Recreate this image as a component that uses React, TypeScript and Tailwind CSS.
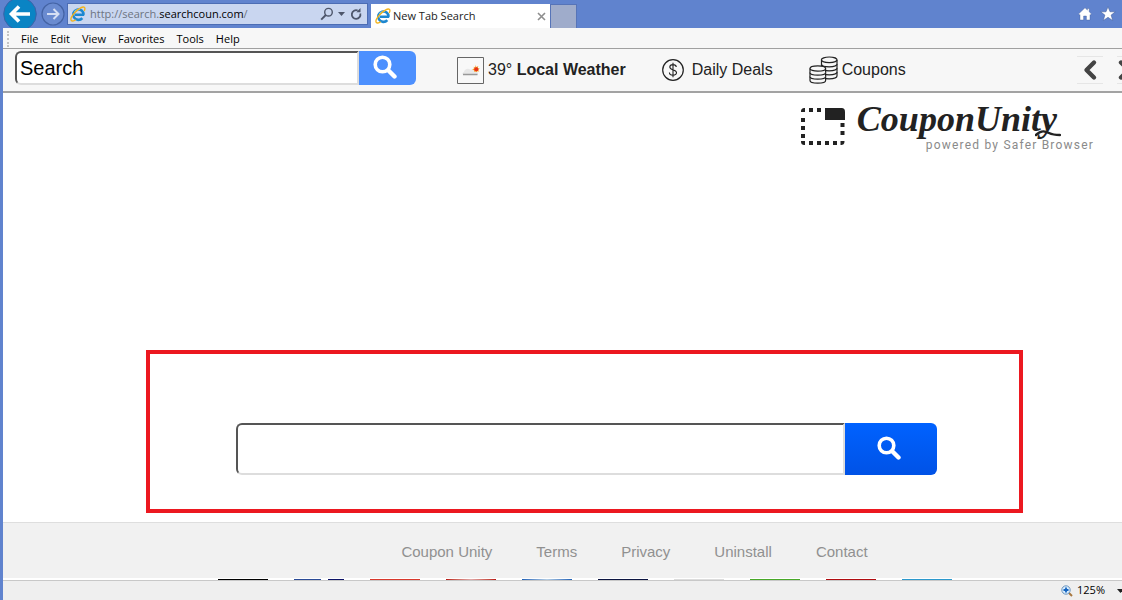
import React from 'react'

const menuItems = ['File', 'Edit', 'View', 'Favorites', 'Tools', 'Help']
const footerLinks = ['Coupon Unity', 'Terms', 'Privacy', 'Uninstall', 'Contact']
const tiles = [
  'bg-black',
  'bg-[linear-gradient(90deg,#2a4a96_54%,#fff_54%_69%,#0c1266_69%)]',
  'bg-[#d8382c]',
  'bg-linear-to-r from-[#b81010] via-[#e0a8a8] to-[#b81010]',
  'bg-linear-to-r from-[#1c5fb4] via-[#b4cde4] to-[#1c5fb4]',
  'bg-[#0c1440]',
  'bg-[#dcdcdc]',
  'bg-[#48a828]',
  'bg-[#b00c10]',
  'bg-[#2c98cc]',
]

function IeLogo() {
  return (
    <svg viewBox="0 0 16 16" className="size-4 shrink-0" fill="none" aria-hidden="true">
      <path d="M14.200 8.800H5M13.600 8.800a5.200 5.200 0 1 0-1.300 3.300" stroke="#1d87cf" strokeWidth="2.600" />
      <path d="M4.400 5.800a5 5 0 0 1 5.600-2" stroke="#7accf2" strokeWidth="1.200" />
      <path
        d="M14.400 4.600c.7-1.800.7-2.900 0-3.300C12.700.3 8.400 2.600 5.100 6.200 1.900 9.800.2 13.500 1.500 14.700c.7.600 2 .3 3.600-.6"
        stroke="#f4b41c"
        strokeWidth="1.400"
        strokeLinecap="round"
      />
    </svg>
  )
}

function SearchIcon({ className }: { className: string }) {
  return (
    <svg viewBox="0 0 24 24" className={className} fill="none" stroke="white" aria-hidden="true">
      <circle cx="9.500" cy="9.500" r="7.300" strokeWidth="3.600" />
      <path d="m15.500 15.500 6 6" strokeWidth="4.400" strokeLinecap="round" />
    </svg>
  )
}

function Chevron({ d }: { d: string }) {
  return (
    <svg viewBox="0 0 16 22" className="h-[22px] w-4 shrink-0" fill="none" aria-hidden="true">
      <path d={d} stroke="#444" strokeWidth="4.400" strokeLinecap="round" strokeLinejoin="round" />
    </svg>
  )
}

function TitleBar() {
  return (
    <header className="flex h-7 items-end overflow-hidden bg-[#6083ce] font-['Open_Sans',sans-serif]">
      <div className="flex h-7 w-16 shrink-0 items-center gap-1">
        <button aria-label="Back" className="-my-1 shrink-0">
          <svg viewBox="0 0 34 34" className="size-[34px]" fill="none">
            <circle cx="17" cy="17" r="16.300" fill="#0a84c4" stroke="#3e62a8" />
            <path d="M27 17H9.500M16 9.500 8.500 17l7.500 7.500" stroke="white" strokeWidth="3.600" />
          </svg>
        </button>
        <button aria-label="Forward" className="shrink-0">
          <svg viewBox="0 0 24 24" className="size-6" fill="none">
            <circle cx="12" cy="12" r="11" fill="#6a8bd0" stroke="#4463a4" strokeWidth="1.200" />
            <path d="M6 12h11M12.500 7l5 5-5 5" stroke="#d5dff4" strokeWidth="2" />
          </svg>
        </button>
      </div>
      <div className="mb-[3px] flex h-[22px] w-[301px] shrink items-center gap-1 border border-[#4c6db4] bg-[#c9d6f0] pr-1 pl-[2px]">
        <IeLogo />
        <a href="#address" className="flex-1 truncate text-[11px] leading-4 text-[#6d7480]">
          http://search.<span className="text-black">searchcoun.com</span>/
        </a>
        <button aria-label="Search address">
          <svg viewBox="0 0 14 14" className="size-3.5" fill="none" stroke="#4d566b">
            <circle cx="8.500" cy="5.200" r="3.800" strokeWidth="1.400" />
            <path d="m5.800 8-4.600 4.600" strokeWidth="1.900" />
          </svg>
        </button>
        <button aria-label="Show history">
          <svg viewBox="0 0 7 4" className="h-1 w-[7px]" fill="#4d566b">
            <path d="M0 0h7L3.500 4z" />
          </svg>
        </button>
        <button aria-label="Refresh">
          <svg viewBox="0 0 14 14" className="size-3.5" fill="none" stroke="#4d566b" strokeWidth="1.800">
            <path d="M11.300 6.500a4.300 4.300 0 1 1-2.600-3" />
            <path d="M11.500 1v4.200H7.300z" fill="#4d566b" stroke="none" />
          </svg>
        </button>
      </div>
      <div className="ml-[3px] flex h-6 w-[179px] shrink items-center gap-[2px] bg-white px-1">
        <IeLogo />
        <span className="flex-1 truncate text-[11px] text-[#222]">New Tab Search</span>
        <button aria-label="Close tab">
          <svg viewBox="0 0 9 9" className="size-[9px]" stroke="#8e8e8e" strokeWidth="1.600">
            <path d="m1 1 7 7M8 1 1 8" />
          </svg>
        </button>
      </div>
      <button aria-label="New tab" className="h-6 w-[27px] border border-b-0 border-[#5674b8] bg-[#9faccb]" />
      <div className="ml-auto flex h-7 items-center gap-2 pr-[6px]">
        <button aria-label="Home">
          <svg viewBox="0 0 14 14" className="size-3.5" fill="white" stroke="#3f5a97" strokeWidth=".4">
            <path d="M7 .8.500 7l1 1L2 7.600V13h3.600V9h2.800v4H12V7.600l.500.400 1-1-2.300-2.200V1.500H9.400v1.600z" />
          </svg>
        </button>
        <button aria-label="Favorites">
          <svg viewBox="0 0 16 16" className="size-4" fill="white" stroke="#3f5a97" strokeWidth=".5">
            <path d="m8 .8 2 5h5.300l-4.200 3.300 1.600 5.400L8 11.300l-4.700 3.200 1.600-5.400L.7 5.800H6z" />
          </svg>
        </button>
      </div>
    </header>
  )
}

function MenuBar() {
  return (
    <nav className="flex h-[21px] items-center gap-3 border-b border-[#a0a0a0] bg-[#f7f7f7] pt-px pl-1 font-['Open_Sans',sans-serif] text-[11px] leading-4 text-black">
      <span className="h-4 border-l-2 border-dotted border-[#c4c4c4]" />
      {menuItems.map((item) => (
        <button key={item}>{item}</button>
      ))}
    </nav>
  )
}

function Toolbar() {
  return (
    <div className="flex h-11 items-center overflow-hidden border-b-2 border-[#a3a3a3] bg-[#f7f7f7] pl-3 text-base text-[#222]">
      <form className="mb-1 flex h-[34px] w-[401px] shrink" onSubmit={(e) => e.preventDefault()}>
        <input
          aria-label="Toolbar search"
          defaultValue="Search"
          className="min-w-0 flex-1 rounded-l-md border-2 border-t-[#555] border-r-[#ddd] border-b-[#ddd] border-l-[#555] bg-white px-[3px] text-xl text-black outline-none"
        />
        <button aria-label="Search" className="flex w-[57px] items-center justify-center rounded-r-md bg-[#4d90fe] pr-[6px] pb-[2px]">
          <SearchIcon className="size-6" />
        </button>
      </form>
      <div className="ml-[41px] flex shrink-0 items-center gap-9">
        <a href="#weather" className="flex items-center gap-1">
          <svg viewBox="0 0 27 27" className="size-[27px]" fill="none">
            <path d="M.5.5h26v26H.5z" fill="#f8f8f8" stroke="#666" />
            <path d="m18.500 8 .8 2 2-1-.5 2 2 .5-1.700 1.200 1.200 1.700-2.100-.1-.3 2-1.700-1.600-2 .6.800-1.900-2-.9 2-.9-.3-1.900 1.500.7z" fill="#f5a030" />
            <circle cx="19.300" cy="12.200" r="2" fill="#e83018" />
            <path d="M7 18c-2 0-2-2.600 0-3 .3-3 4-4.500 6.500-2.300 2.300-.5 3.500.8 3.700 2 2.800-.3 4 .4 3.800 1.800 0 1-1 1.500-2 1.500z" fill="#e8e8e8" />
            <path d="M6 17.500h14.500" stroke="#999" strokeWidth="1.500" />
          </svg>
          <span>39° <b>Local Weather</b></span>
        </a>
        <a href="#deals" className="flex items-center gap-2">
          <svg viewBox="0 0 22 22" className="size-[22px]" fill="none" stroke="#222">
            <circle cx="11" cy="11" r="10.300" strokeWidth="1.200" />
            <path d="M14.300 8c-.2-1.600-1.500-2.400-3.300-2.400-1.900 0-3.200.9-3.200 2.500 0 3.900 6.700 1.800 6.700 5.500 0 1.700-1.500 2.600-3.500 2.600s-3.500-.9-3.600-2.700M11 3.700v14.600" strokeWidth="1.100" />
          </svg>
          Daily Deals
        </a>
        <a href="#coupons" className="flex items-center gap-1">
          <svg viewBox="0 0 29 28" className="h-7 w-[29px]" fill="#f7f7f7" stroke="#222" strokeWidth="1.200">
            <path d="M12.500 4v16c0 1.700 3.300 2.800 7.700 2.800s7.800-1.100 7.800-2.800V4" />
            <path d="M12.500 8c0 1.700 3.300 2.800 7.700 2.800S28 9.700 28 8m-15.500 4c0 1.700 3.300 2.800 7.700 2.800S28 13.700 28 12m-15.500 4c0 1.700 3.300 2.800 7.700 2.800S28 17.700 28 16" />
            <ellipse cx="20.200" cy="3.800" rx="7.800" ry="2.800" />
            <path d="M1 12.500v12c0 1.600 3.300 2.700 7.800 2.700s7.800-1.100 7.800-2.700v-12" />
            <path d="M1 16.500c0 1.600 3.300 2.700 7.800 2.700s7.800-1.100 7.800-2.700M1 20.500c0 1.600 3.300 2.700 7.800 2.700s7.800-1.100 7.800-2.700" />
            <ellipse cx="8.800" cy="12.500" rx="7.800" ry="2.700" />
          </svg>
          Coupons
        </a>
      </div>
      <div className="-mr-[21px] ml-auto flex shrink-0 gap-[14px]">
        <button aria-label="Previous" className="flex w-[26px] justify-center border-y border-[#e6e6e6] py-[2px]">
          <Chevron d="M12 3.500 4.500 11l7.500 7.500" />
        </button>
        <button aria-label="Next" className="flex w-[26px] border-y border-[#e6e6e6] py-[2px]">
          <Chevron d="m4 3.500 7.500 7.500-7.500 7.500" />
        </button>
      </div>
    </div>
  )
}

function Logo() {
  return (
    <div className="flex items-start gap-3 self-end pt-2 pr-7">
      <svg viewBox="0 0 44 38" className="mt-[7px] h-[38px] w-11" fill="none">
        <path d="M8 2h4m4 0h4M2 10v4m0 4v4m0 4v4m6 5h4m4 0h4m4 0h4m4 0h4M41.500 15v4m0 4v4" stroke="#222" strokeWidth="4" />
        <path d="M0 4c0-3 1-4 4-4v4zM0 33h4v4c-3 0-4-1-4-4zM43.500 33h-4v4c3 0 4-1 4-4zM24 0h16c3 0 4 1 4 4v8H24z" fill="#222" />
      </svg>
      <div className="flex flex-col items-end">
        <div className="relative self-start font-['Liberation_Serif',serif] text-[36px] leading-9 font-bold text-[#222] italic">
          CouponUnity
          <svg viewBox="0 0 26 8" className="absolute -right-1 bottom-0 h-2 w-[26px]" fill="none">
            <path d="M1 6C6 1 10 2 14 4s7 2 11 2" stroke="#222" strokeWidth="2.500" strokeLinecap="round" />
          </svg>
        </div>
        <div className="ml-[69px] font-[Roboto,sans-serif] text-xs leading-4 tracking-widest text-[#8a8a8a]">
          powered by Safer Browser
        </div>
      </div>
    </div>
  )
}

export default function App(): React.JSX.Element {
  return (
    <div className="flex min-h-screen flex-col border-l-[3px] border-[#6083ce] bg-white font-['Liberation_Sans',Arial,sans-serif]">
      <TitleBar />
      <MenuBar />
      <Toolbar />
      <main className="flex flex-1 flex-col justify-between pb-[9px]">
        <Logo />
        <section className="mr-[99px] ml-[143px] border-4 border-[#ec1820] pt-[69px] pr-[82px] pb-[34px] pl-[86px]">
          <form className="flex h-[52px]" onSubmit={(e) => e.preventDefault()}>
            <input
              aria-label="Search the web"
              className="min-w-0 flex-1 rounded-l-md border-2 border-t-[#555] border-r-[#ddd] border-b-[#ddd] border-l-[#555] bg-white px-3 text-xl outline-none"
            />
            <button
              aria-label="Search"
              className="flex w-[92px] items-center justify-center rounded-r-md bg-linear-to-b from-[#0062ff] to-[#0052e6] pr-1 pb-[2px]"
            >
              <SearchIcon className="size-6" />
            </button>
          </form>
        </section>
      </main>
      <footer className="border-t border-[#dedede] bg-[#f1f1f1]">
        <nav className="flex justify-center gap-11 pt-[18px] pb-[15px] pl-36 text-[15px] leading-[22px] text-[#909090]">
          {footerLinks.map((link) => (
            <a key={link} href="#footer">{link}</a>
          ))}
        </nav>
        <div className="flex justify-center gap-[26px] bg-white pt-px pl-11">
          {tiles.map((tile) => (
            <span key={tile} className={`h-px w-[50px] ${tile}`} />
          ))}
        </div>
      </footer>
      <div className="flex h-5 items-center justify-end gap-1 border-t border-[#c8c8c8] bg-[#efefef] font-['Open_Sans',sans-serif] text-[11px] text-black">
        <svg viewBox="0 0 12 12" className="size-3" fill="none">
          <path d="m7.500 7.500 3.500 3.500" stroke="#a87840" strokeWidth="2" />
          <circle cx="5" cy="5" r="4.200" fill="#d8ecfc" stroke="#6b93bd" />
          <path d="M5 2.500v5M2.500 5h5" stroke="#1464c0" strokeWidth="1.800" />
        </svg>
        <span>125%</span>
        <button aria-label="Change zoom level" className="-mr-[2px] ml-2">
          <svg viewBox="0 0 7 4" className="h-1 w-[7px]" fill="#222">
            <path d="M0 0h7L3.500 4z" />
          </svg>
        </button>
      </div>
    </div>
  )
}
